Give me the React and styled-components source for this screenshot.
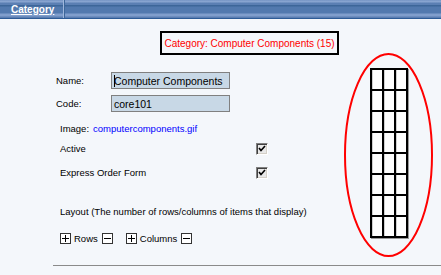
import React from 'react';
import styled, { createGlobalStyle } from 'styled-components';

const GlobalStyle = createGlobalStyle`
  html, body {
    margin: 0;
    padding: 0;
    background: #f4f7fb;
  }
  body {
    font-family: "Liberation Sans", Arial, sans-serif;
  }
`;

const Page = styled.div`
  width: 441px;
  height: 275px;
  overflow: hidden;
  background: #f4f7fb;
`;

const HeaderBar = styled.div`
  display: flex;
  height: 18px;
  border-bottom: 1px solid #2d5b96;
  background: linear-gradient(
    to bottom,
    #6f8fc0 0,
    #88a4d0 1px,
    #88a4d0 2px,
    #5b7fb3 3px,
    #5b7fb3 5px,
    #3d6699 5px,
    #3d6699 6px,
    #5279ae 7px,
    #5279ae 13px,
    #809ecc 14px,
    #809ecc 16px,
    #5a7db1 17px
  );
`;

const Tab = styled.div`
  width: 52px;
  padding-left: 11px;
  border-right: 1px solid #9fb7dc;
  box-shadow: 1px 0 0 #3d6699;
  display: flex;
  align-items: center;
  color: #fff;
  font-weight: bold;
  font-size: 10px;
  text-decoration: underline;
`;

const Body = styled.div`
  display: flex;
`;

const FormColumn = styled.div`
  width: 344px;
  display: flex;
  flex-direction: column;
`;

const TitleBox = styled.div`
  margin: 12px 0 0 160px;
  width: 175px;
  height: 20px;
  border: 2px solid #000;
  display: flex;
  align-items: center;
  justify-content: center;
  color: #ff0000;
  font-size: 10px;
`;

const Row = styled.div`
  display: flex;
  align-items: center;
  margin-top: ${(p) => p.$mt}px;
  margin-left: ${(p) => p.$ml || 60}px;
  height: ${(p) => p.$h || 13}px;
  font-size: 9.5px;
  color: #000;
`;

const Label = styled.span`
  width: ${(p) => p.$w}px;
  flex-shrink: 0;
`;

const TextInput = styled.div`
  box-sizing: border-box;
  width: 119px;
  height: 17px;
  border: 1px solid #808080;
  background: #c8d8e6;
  font-size: 10.5px;
  padding-left: 2px;
  display: flex;
  align-items: center;
`;

const Caret = styled.span`
  display: inline-block;
  width: 1px;
  height: 12px;
  background: #000;
  margin-right: -1px;
`;

const Link = styled.span`
  color: #0000ff;
  margin-left: 4px;
`;

const CheckBox = styled.div`
  box-sizing: border-box;
  width: 12px;
  height: 12px;
  border-top: 1px solid #808080;
  border-left: 1px solid #808080;
  border-right: 1px solid #fff;
  border-bottom: 1px solid #fff;
  box-shadow: inset 1px 1px 0 #404040, inset -1px -1px 0 #d4d0c8;
  background: #e8e8e8;
  display: flex;
  align-items: center;
  justify-content: center;
`;

const StepBox = styled.div`
  box-sizing: border-box;
  width: 11px;
  height: 11px;
  border: 1px solid #333;
  background: #fff;
  margin-right: ${(p) => p.$mr || 0}px;
  display: flex;
  align-items: center;
  justify-content: center;
`;

const StepLabel = styled.span`
  margin: 0 4px 0 3px;
`;

const Rule = styled.div`
  margin: 8px 0 0 53px;
  border-top: 1px solid #8a8a8a;
`;

const GridPanel = styled.div`
  position: relative;
  margin-top: 34px;
  width: 89px;
  height: 204px;
  display: flex;
  align-items: center;
  justify-content: center;
`;

const Ring = styled.svg`
  position: absolute;
  left: 0;
  top: 0;
`;

const CellGrid = styled.div`
  display: grid;
  grid-template-columns: repeat(3, 10px);
  grid-template-rows: repeat(8, 19px);
  gap: 2px;
  padding: 2px;
  background: #000;
  box-shadow: 1px 1px 0 #9a9a9a;
  margin-top: -4px;
`;

const Cell = styled.div`
  background: #fff;
  box-shadow: inset 1px 0 0 #d0d0d0;
`;

const Check = () => (
  <svg width="8" height="8" viewBox="0 0 8 8">
    <path d="M1 3 L3 5.5 L7 1" fill="none" stroke="#000" strokeWidth="1.6" />
  </svg>
);

const Plus = () => (
  <svg width="7" height="7" viewBox="0 0 7 7">
    <path d="M0 3.5 H7 M3.5 0 V7" stroke="#000" strokeWidth="1" />
  </svg>
);

const Minus = () => (
  <svg width="7" height="7" viewBox="0 0 7 7">
    <path d="M0 3.5 H7" stroke="#000" strokeWidth="1" />
  </svg>
);

export default function App() {
  const cells = Array.from({ length: 24 });
  return (
    <Page>
      <GlobalStyle />
      <HeaderBar>
        <Tab>Category</Tab>
      </HeaderBar>
      <Body>
        <FormColumn>
          <TitleBox>Category: Computer Components (15)</TitleBox>

          <Row $mt={17} $ml={56} $h={17}>
            <Label $w={55}>Name:</Label>
            <TextInput>
              <Caret />
              Computer Components
            </TextInput>
          </Row>
          <Row $mt={6} $ml={56} $h={17}>
            <Label $w={55}>Code:</Label>
            <TextInput>core101</TextInput>
          </Row>

          <Row $mt={10}>
            <span>Image:</span>
            <Link>computercomponents.gif</Link>
          </Row>

          <Row $mt={7}>
            <Label $w={196}>Active</Label>
            <CheckBox>
              <Check />
            </CheckBox>
          </Row>
          <Row $mt={11}>
            <Label $w={196}>Express Order Form</Label>
            <CheckBox>
              <Check />
            </CheckBox>
          </Row>

          <Row $mt={26}>
            Layout (The number of rows/columns of items that display)
          </Row>

          <Row $mt={14}>
            <StepBox>
              <Plus />
            </StepBox>
            <StepLabel>Rows</StepLabel>
            <StepBox $mr={13}>
              <Minus />
            </StepBox>
            <StepBox>
              <Plus />
            </StepBox>
            <StepLabel>Columns</StepLabel>
            <StepBox>
              <Minus />
            </StepBox>
          </Row>
        </FormColumn>

        <GridPanel>
          <Ring width="89" height="204" viewBox="0 0 89 204">
            <ellipse cx="44.5" cy="102" rx="43.5" ry="101" fill="none" stroke="#ff0000" strokeWidth="2" />
          </Ring>
          <CellGrid>
            {cells.map((_, i) => (
              <Cell key={i} />
            ))}
          </CellGrid>
        </GridPanel>
      </Body>
      <Rule />
    </Page>
  );
}
